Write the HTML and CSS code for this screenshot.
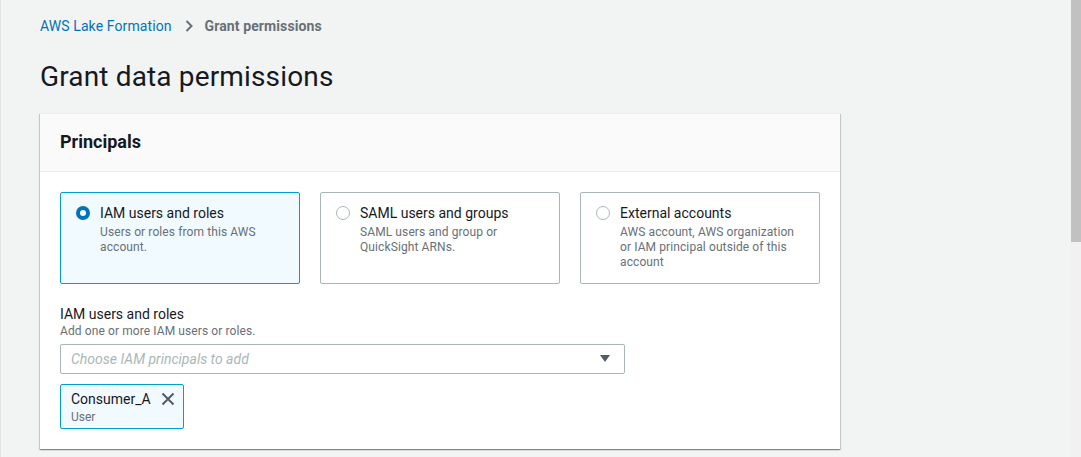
FILE: index.html
```html
<!DOCTYPE html>
<html lang="en">
<head>
<meta charset="utf-8">
<title>Grant data permissions</title>
<link rel="stylesheet" href="styles.css">
</head>
<body>
<div class="layout">
  <main class="page">
    <nav class="breadcrumbs">
      <a class="crumb-link" href="#">AWS Lake Formation</a>
      <svg class="crumb-sep" width="10" height="14" viewBox="0 0 10 14"><path d="M2.5 2 L7.5 7 L2.5 12" fill="none" stroke="#687078" stroke-width="2"/></svg>
      <span class="crumb-current">Grant permissions</span>
    </nav>
    <h1 class="title">Grant data permissions</h1>

    <section class="card">
      <header class="card-header">
        <h2>Principals</h2>
      </header>
      <div class="card-body">
        <div class="tiles">
          <label class="tile selected">
            <span class="radio checked"></span>
            <span class="tile-text">
              <span class="tile-title">IAM users and roles</span>
              <span class="tile-desc">Users or roles from this AWS account.</span>
            </span>
          </label>
          <label class="tile">
            <span class="radio"></span>
            <span class="tile-text">
              <span class="tile-title">SAML users and groups</span>
              <span class="tile-desc">SAML users and group or QuickSight ARNs.</span>
            </span>
          </label>
          <label class="tile">
            <span class="radio"></span>
            <span class="tile-text">
              <span class="tile-title">External accounts</span>
              <span class="tile-desc">AWS account, AWS organization or IAM principal outside of this account</span>
            </span>
          </label>
        </div>

        <div class="field">
          <div class="field-label">IAM users and roles</div>
          <div class="field-desc">Add one or more IAM users or roles.</div>
          <div class="select">
            <span class="placeholder">Choose IAM principals to add</span>
            <svg class="caret" width="10" height="8" viewBox="0 0 10 8"><path d="M0 0 H10 L5 7 Z" fill="#545b64"/></svg>
          </div>
          <div class="tokens">
            <div class="token">
              <div class="token-text">
                <div class="token-name">Consumer_A</div>
                <div class="token-type">User</div>
              </div>
              <svg class="token-x" width="14" height="14" viewBox="0 0 14 14"><path d="M1.5 1.5 L12.5 12.5 M12.5 1.5 L1.5 12.5" fill="none" stroke="#545b64" stroke-width="2"/></svg>
            </div>
          </div>
        </div>
      </div>
    </section>
  </main>
  <div class="scrollbar"><div class="thumb"></div></div>
</div>
</body>
</html>
```

FILE: styles.css
```css
html, body {
  margin: 0;
  padding: 0;
  height: 100%;
}
body {
  background: #f2f3f3;
  font-family: Roboto, "Liberation Sans", Arial, sans-serif;
  color: #16191f;
  overflow: hidden;
}
.layout {
  display: flex;
  height: 457px;
  border-left: 1px solid #e3e5e5;
}
.page {
  flex: 1;
  padding: 17px 0 0 39px;
}
.breadcrumbs {
  display: flex;
  align-items: center;
  height: 18px;
  font-size: 14px;
  line-height: 18px;
  letter-spacing: 0.1px;
}
.crumb-link {
  color: #0073bb;
  text-decoration: none;
}
.crumb-sep {
  margin: 0 11px 0 12px;
}
.crumb-current {
  color: #687078;
  font-weight: 700;
}
.title {
  margin: 24px 0 18px;
  font-size: 28px;
  line-height: 36px;
  font-weight: 400;
  letter-spacing: 0.15px;
  color: #16191f;
}
.card {
  width: 800px;
  background: #fff;
  border-top: 1px solid #eaeded;
  box-shadow: 0 1px 1px 0 rgba(0, 28, 36, 0.3), 1px 1px 1px 0 rgba(0, 28, 36, 0.15), -1px 1px 1px 0 rgba(0, 28, 36, 0.15);
}
.card-header {
  background: #fafafa;
  border-bottom: 1px solid #eaeded;
  padding: 18px 20px 19px;
}
.card-header h2 {
  margin: 0;
  font-size: 18px;
  line-height: 20px;
  font-weight: 700;
}
.card-body {
  padding: 20px 20px 20px;
}
.tiles {
  display: grid;
  grid-template-columns: repeat(3, 240px);
  column-gap: 20px;
}
.tile {
  display: flex;
  gap: 10px;
  align-items: flex-start;
  height: 92px;
  box-sizing: border-box;
  border: 1px solid #aab7b8;
  border-radius: 2px;
  padding: 10px 15px;
  background: #fff;
}
.tile.selected {
  background: #f1faff;
  border-color: #00a1c9;
}
.radio {
  flex: none;
  width: 14px;
  height: 14px;
  box-sizing: border-box;
  border: 1px solid #aab7b8;
  border-radius: 50%;
  background: #fff;
  margin-top: 3px;
}
.radio.checked {
  border: 4px solid #0073bb;
}
.tile-text {
  display: flex;
  flex-direction: column;
}
.tile-title {
  font-size: 14px;
  line-height: 20px;
  color: #16191f;
}
.tile-desc {
  font-size: 12px;
  line-height: 15px;
  letter-spacing: 0.1px;
  color: #687078;
  margin-top: 2px;
}
.field {
  margin-top: 20px;
}
.field-label {
  font-size: 14px;
  line-height: 20px;
  color: #16191f;
}
.field-desc {
  font-size: 12px;
  line-height: 15px;
  letter-spacing: 0.1px;
  color: #687078;
}
.select {
  margin-top: 5px;
  width: 565px;
  height: 30px;
  box-sizing: border-box;
  border: 1px solid #aab7b8;
  border-radius: 2px;
  background: #fff;
  display: flex;
  align-items: center;
  justify-content: space-between;
  padding: 0 14px 0 10px;
}
.placeholder {
  font-size: 14px;
  font-style: italic;
  color: #aab7b8;
}
.caret {
  display: block;
}
.tokens {
  margin-top: 10px;
  display: flex;
}
.token {
  display: flex;
  align-items: flex-start;
  gap: 10px;
  box-sizing: border-box;
  height: 45px;
  border: 1px solid #00a1c9;
  border-radius: 2px;
  background: #f1faff;
  padding: 4px 8px 4px 10px;
}
.token-name {
  font-size: 14px;
  line-height: 20px;
  color: #16191f;
}
.token-type {
  font-size: 12px;
  line-height: 16px;
  color: #687078;
}
.token-x {
  margin-top: 3px;
  display: block;
}
.scrollbar {
  width: 10px;
  flex: none;
  background: #f1f1f1;
}
.thumb {
  height: 242px;
  background: #c1c1c1;
}
```
